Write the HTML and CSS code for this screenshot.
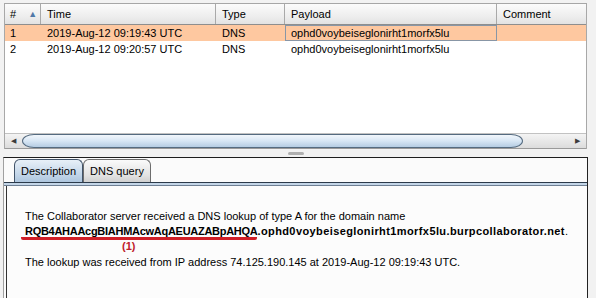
FILE: index.html
```html
<!DOCTYPE html>
<html lang="en">
<head>
    <meta charset="UTF-8">
    <title>Collaborator interactions</title>
    <link rel="stylesheet" href="styles.css">
</head>
<body>
    <div class="top-pane">
        <div class="grid">
            <div class="row head">
                <div class="cell c-num">#<span class="sort">&#9650;</span></div>
                <div class="cell c-time">Time</div>
                <div class="cell c-type">Type</div>
                <div class="cell c-payload">Payload</div>
                <div class="cell c-comment">Comment</div>
            </div>
            <div class="row selected">
                <div class="cell c-num">1</div>
                <div class="cell c-time">2019-Aug-12 09:19:43 UTC</div>
                <div class="cell c-type">DNS</div>
                <div class="cell c-payload focus">ophd0voybeiseglonirht1morfx5lu</div>
                <div class="cell c-comment"></div>
            </div>
            <div class="row">
                <div class="cell c-num">2</div>
                <div class="cell c-time">2019-Aug-12 09:20:57 UTC</div>
                <div class="cell c-type">DNS</div>
                <div class="cell c-payload">ophd0voybeiseglonirht1morfx5lu</div>
                <div class="cell c-comment"></div>
            </div>
            <div class="filler"></div>
        </div>
        <div class="hscroll">
            <div class="arrow left">&#9664;</div>
            <div class="track">
                <div class="thumb"></div>
            </div>
            <div class="arrow right">&#9654;</div>
        </div>
    </div>

    <div class="divider"><span class="grip"></span></div>

    <div class="bottom-pane">
        <div class="tabs">
            <div class="tab active">Description</div>
            <div class="tab">DNS query</div>
        </div>
        <div class="tab-line"></div>
        <div class="content">
            <p class="line">The Collaborator server received a DNS lookup of type A for the domain name</p>
            <p class="line domain"><span class="marked">RQB4AHAAcgBIAHMAcwAqAEUAZABpAHQA</span><b class="host">.ophd0voybeiseglonirht1morfx5lu.burpcollaborator.net</b>.</p>
            <p class="note">(1)</p>
            <p class="line last">The lookup was received from IP address 74.125.190.145 at 2019-Aug-12 09:19:43 UTC.</p>
        </div>
    </div>
</body>
</html>
```

FILE: styles.css
```css
* {
    margin: 0;
    padding: 0;
    box-sizing: border-box;
}

body {
    font-family: "Liberation Sans", Arial, sans-serif;
    font-size: 11px;
    color: #000;
    background: #f2f2f2;
    width: 596px;
    height: 298px;
    overflow: hidden;
}

/* table */

.top-pane {
    margin: 3px 9px 0 4px;
    border-left: 1px solid #a8a8a8;
    border-right: 1px solid #a8a8a8;
}

.grid {
    background: #ffffff;
    height: 130px;
    display: flex;
    flex-direction: column;
}

.row {
    display: flex;
    height: 16px;
    align-items: stretch;
}

.row.head {
    height: 22px;
    border-top: 1px solid #a6a6a6;
    border-bottom: 1px solid #8e8e8e;
    background: linear-gradient(#fbfbfb, #eeeeee 60%, #e2e2e2);
}

.cell {
    padding-left: 6px;
    line-height: 16px;
    white-space: nowrap;
    overflow: hidden;
}

.head .cell {
    line-height: 20px;
    border-right: 1px solid #a9a9a9;
}

.head .cell:last-child {
    border-right: none;
}

.c-num { width: 36px; padding-left: 5px; }
.c-time { width: 175px; }
.c-type { width: 69px; }
.c-payload { width: 212px; }
.c-comment { flex: 1; }

.sort {
    font-size: 9px;
    color: #4f79a8;
    margin-left: 12px;
    position: relative;
    top: -1px;
}

.row.selected {
    background: #fec8a0;
}

.cell.focus {
    border: 1px solid #8896a6;
    padding-left: 5px;
    line-height: 14px;
}

.filler {
    flex: 1;
}

/* horizontal scrollbar */

.hscroll {
    display: flex;
    height: 16px;
    border-top: 1px solid #c2c2c2;
    border-bottom: 1px solid #9a9a9a;
    background: linear-gradient(#f4f4f4, #dcdcdc);
}

.arrow {
    width: 17px;
    font-size: 7px;
    color: #3c3c3c;
    line-height: 14px;
    text-align: center;
}

.track {
    flex: 1;
    display: flex;
    padding-right: 46px;
}

.thumb {
    flex: 1;
    border: 1px solid #556b80;
    border-radius: 12px / 7px;
    background: linear-gradient(#f2f7fc, #d7e6f4 50%, #b5cce2);
}

/* split divider */

.divider {
    height: 8px;
    display: flex;
    justify-content: center;
    align-items: center;
}

.grip {
    width: 16px;
    height: 3px;
    border-radius: 2px;
    background: #b0b0b0;
    margin-left: -4px;
}

/* lower panel */

.bottom-pane {
    margin: 0 8px 0 3px;
    height: 143px;
    border-top: 1px solid #1e1e1e;
    border-left: 1px solid #a0a0a0;
    border-right: 1px solid #222;
    background: #fbfbfb;
    display: flex;
    flex-direction: column;
}

.tabs {
    display: flex;
    padding: 1px 0 0 10px;
    height: 24px;
}

.tab {
    height: 23px;
    line-height: 23px;
    text-align: center;
    border: 1px solid #6d6d6d;
    border-bottom: none;
    border-radius: 6px 6px 0 0;
    background: linear-gradient(#fafafa, #e2e2e2 70%, #d0d0d0);
    width: 68px;
}

.tab.active {
    width: 69px;
    border-color: #42546a;
    background: linear-gradient(#e8f0f8, #c6d8ea 60%, #aec6de);
}

.tab-line {
    height: 4px;
    border-top: 1px solid #2b3a4a;
    border-bottom: 1px solid #6f8094;
    background: #c3d5e7;
}

.content {
    flex: 1;
    margin-left: 2px;
    border-left: 1px solid #333;
    background: #fcfcfc;
    padding: 23px 0 0 18px;
}

.line {
    line-height: 15px;
    white-space: nowrap;
}

.marked {
    font-weight: bold;
    letter-spacing: -0.28px;
    border-bottom: 3px solid #d01f27;
    border-radius: 2px;
    padding-left: 4px;
    margin-left: -4px;
}

.host {
    letter-spacing: 0.4px;
}

.note {
    color: #c0202a;
    font-weight: bold;
    line-height: 14px;
    padding-left: 97px;
}

.line.last {
    margin-top: 2px;
}
```
